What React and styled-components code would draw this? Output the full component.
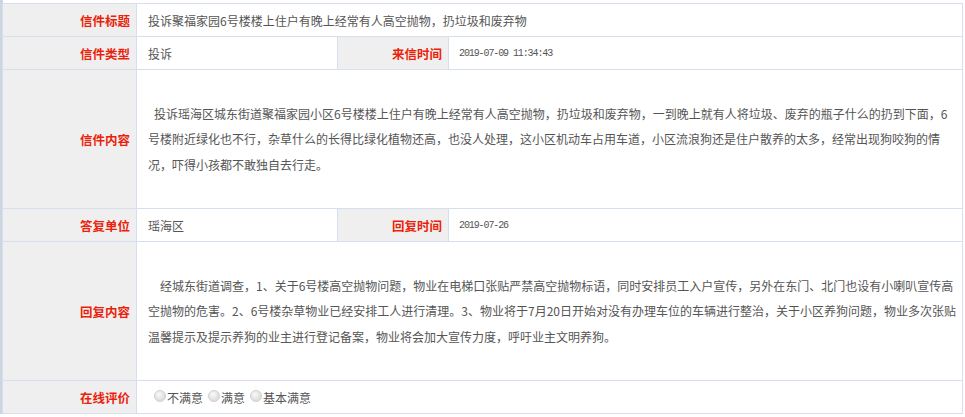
import styled, { createGlobalStyle } from 'styled-components'

const GlobalStyle = createGlobalStyle`
    html, body {
        margin: 0;
        padding: 0;
        background: #fff;
    }
    body {
        font-family: "Noto Sans CJK SC", "Noto Sans", sans-serif;
        font-size: 12px;
        color: #555;
    }
`

const Page = styled.div`
    border-left: 3px solid #cbd6e0;
    padding-top: 3px;
    min-height: 414px;
    box-sizing: border-box;
`

const Table = styled.table`
    width: 960px;
    border-collapse: collapse;
    table-layout: fixed;
    margin-left: -1px;
`

const Row = styled.tr`
    height: ${props => props.tall ? 139 : 33}px;
`

const Label = styled.th`
    background: #efefef;
    border: 1px solid #d5dfee;
    color: #ea1f0c;
    font-weight: bold;
    font-size: 12.5px;
    text-align: right;
    padding: 0 6px 0 0;
    white-space: nowrap;
`

const Value = styled.td`
    border: 1px solid #d5dfee;
    padding: 0 4px 0 11px;
    color: #555;
    font-size: 12px;
`

const Time = styled(Value)`
    font-family: "Liberation Mono", monospace;
    font-size: 10px;
    letter-spacing: -1.1px;
    padding-left: 10px;
`

const Text = styled.p`
    margin: 0;
    line-height: 25.5px;
    text-indent: ${props => props.indent}px;
`

const Choice = styled.label`
    display: inline-flex;
    align-items: center;
    margin-right: 5px;
    color: #555;
`

const Radio = styled.input.attrs({ type: 'radio', name: 'rate' })`
    appearance: none;
    width: 12px;
    height: 12px;
    margin: -2px 1px 0 0;
    border-radius: 50%;
    border: 1px solid #d2d2d2;
    background: radial-gradient(circle at 40% 35%, #fafafa, #dcdcdc 70%);
    box-sizing: border-box;
`

const complaint = '投诉瑶海区城东街道聚福家园小区6号楼楼上住户有晚上经常有人高空抛物，扔垃圾和废弃物，一到晚上就有人将垃圾、废弃的瓶子什么的扔到下面，6号楼附近绿化也不行，杂草什么的长得比绿化植物还高，也没人处理，这小区机动车占用车道，小区流浪狗还是住户散养的太多，经常出现狗咬狗的情况，吓得小孩都不敢独自去行走。'

const reply = '经城东街道调查，1、关于6号楼高空抛物问题，物业在电梯口张贴严禁高空抛物标语，同时安排员工入户宣传，另外在东门、北门也设有小喇叭宣传高空抛物的危害。2、6号楼杂草物业已经安排工人进行清理。3、物业将于7月20日开始对没有办理车位的车辆进行整治，关于小区养狗问题，物业多次张贴温馨提示及提示养狗的业主进行登记备案，物业将会加大宣传力度，呼吁业主文明养狗。'

const ratings = ['不满意', '满意', '基本满意']

export default function App() {
    return (
        <Page>
            <GlobalStyle />
            <Table>
                <colgroup>
                    <col style={{ width: 134 }} />
                    <col style={{ width: 201 }} />
                    <col style={{ width: 111 }} />
                    <col style={{ width: 514 }} />
                </colgroup>
                <tbody>
                    <Row>
                        <Label>信件标题</Label>
                        <Value colSpan={3}>投诉聚福家园6号楼楼上住户有晚上经常有人高空抛物，扔垃圾和废弃物</Value>
                    </Row>
                    <Row>
                        <Label>信件类型</Label>
                        <Value>投诉</Value>
                        <Label>来信时间</Label>
                        <Time>2019-07-09 11:34:43</Time>
                    </Row>
                    <Row tall>
                        <Label>信件内容</Label>
                        <Value colSpan={3}>
                            <Text indent={6}>{complaint}</Text>
                        </Value>
                    </Row>
                    <Row>
                        <Label>答复单位</Label>
                        <Value>瑶海区</Value>
                        <Label>回复时间</Label>
                        <Time>2019-07-26</Time>
                    </Row>
                    <Row tall>
                        <Label>回复内容</Label>
                        <Value colSpan={3}>
                            <Text indent={12}>{reply}</Text>
                        </Value>
                    </Row>
                    <Row>
                        <Label>在线评价</Label>
                        <Value colSpan={3} style={{ paddingLeft: 17 }}>
                            {ratings.map(r => (
                                <Choice key={r}><Radio />{r}</Choice>
                            ))}
                        </Value>
                    </Row>
                </tbody>
            </Table>
        </Page>
    )
}
